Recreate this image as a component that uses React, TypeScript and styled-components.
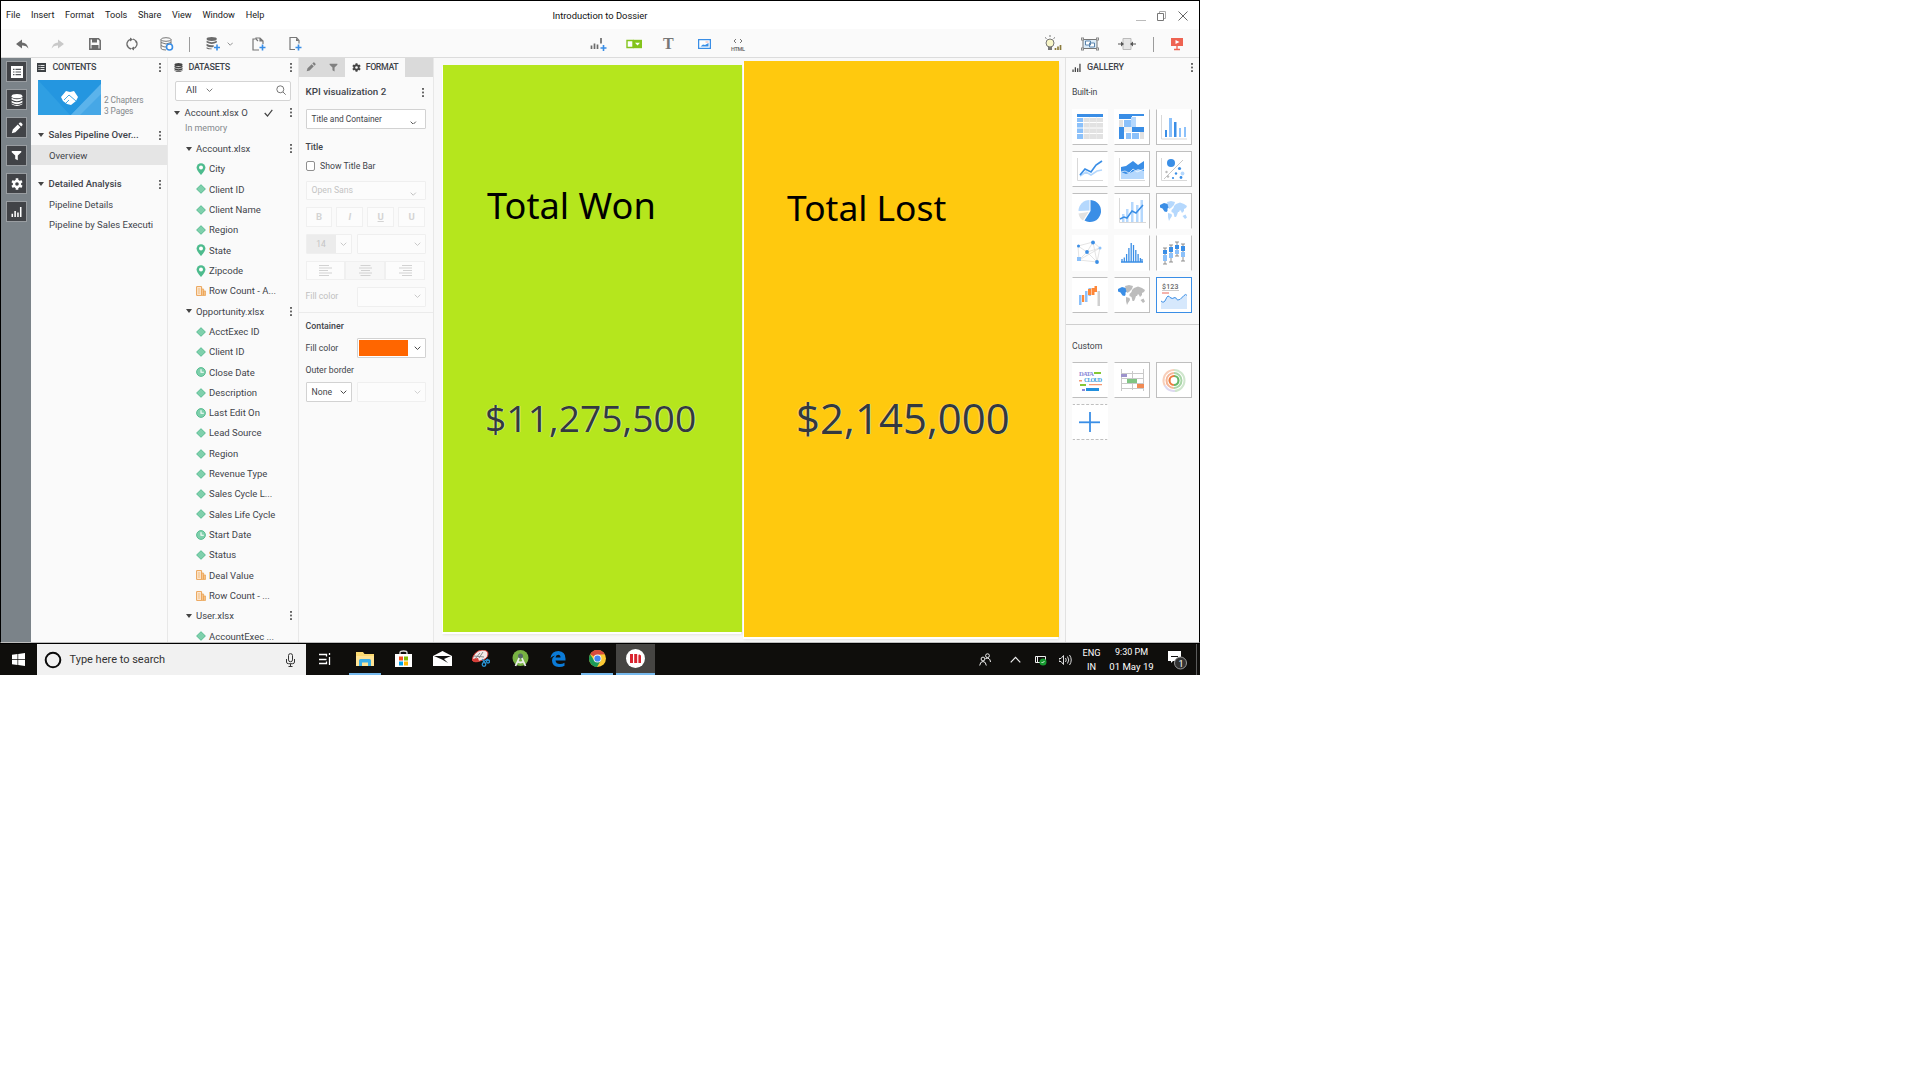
import React from 'react';
import styled, { createGlobalStyle, css } from 'styled-components';

const Global = createGlobalStyle`
  * { box-sizing: border-box; }
  body { margin: 0; background: #fff; font-family: Roboto, "Open Sans", sans-serif; color: #3c4248; }
  svg { display: block; flex: none; }
`;

const Desktop = styled.div`
  width: 1200px;
  height: 675px;
  display: flex;
  flex-direction: column;
  overflow: hidden;
`;
const AppWindow = styled.div`
  height: 643px;
  border: 1px solid #000;
  border-bottom-color: #bdbdbd;
  display: flex;
  flex-direction: column;
  background: #fafafa;
`;

const Text = styled.span<{ $size?: number; $weight?: number; $color?: string; $track?: number }>`
  font-size: ${p => p.$size ?? 9.5}px;
  font-weight: ${p => p.$weight ?? 400};
  color: ${p => p.$color ?? '#3f444a'};
  letter-spacing: ${p => p.$track ?? 0}px;
  line-height: 1;
  white-space: nowrap;
`;
const SerifGlyph = styled.span`
  font: 700 16px/1 "Liberation Serif", serif;
  width: 10px;
  color: #777;
`;
const Gap = styled.div<{ $w: number }>`
  flex: none;
  width: ${p => p.$w}px;
`;
const Spacer = styled.div<{ $h: number }>`
  flex: none;
  height: ${p => p.$h}px;
`;
const Fill = styled.div`
  flex: 1;
`;

/* ---------- title / menu bar ---------- */
const MenuBar = styled.div`
  height: 28px;
  flex: none;
  background: #fff;
  display: grid;
  grid-template-columns: 1fr auto 1fr;
  align-items: center;
  padding: 1px 5px 0;
`;
const Menus = styled.div`
  display: flex;
  gap: 10.7px;
`;
const WindowButtons = styled.div`
  display: flex;
  justify-content: flex-end;
  align-items: center;
  gap: 11px;
  padding-right: 6px;
`;

/* ---------- toolbar ---------- */
const Toolbar = styled.div`
  height: 29px;
  flex: none;
  border-bottom: 1px solid #dcdcdc;
  display: flex;
  align-items: center;
  padding: 2px 0 0 14px;
`;
const Separator = styled.div`
  width: 1px;
  height: 15px;
  background: #9b9b9b;
`;

const Workspace = styled.div`
  flex: 1;
  min-height: 0;
  display: flex;
`;

/* ---------- left rail ---------- */
const Rail = styled.div`
  width: 30px;
  flex: none;
  background: #7b8389;
  padding: 3px 0 0 5px;
  display: flex;
  flex-direction: column;
  gap: 7px;
`;
const RailButton = styled.div`
  width: 21px;
  height: 21px;
  background: #414347;
  border: 1px solid #999da1;
  display: flex;
  align-items: center;
  justify-content: center;
`;

/* ---------- panels ---------- */
const Panel = styled.div<{ $width: number }>`
  width: ${p => p.$width}px;
  flex: none;
  border-right: 1px solid #e8e8e8;
  display: flex;
  flex-direction: column;
  overflow: hidden;
`;
const PanelHeader = styled.div`
  height: 20px;
  flex: none;
  display: flex;
  align-items: center;
  padding: 0 5px 1px 6px;
`;
const Dots = styled.div`
  width: 2px;
  height: 9px;
  flex: none;
  margin-right: 1px;
  background: linear-gradient(#666 0 1.6px, transparent 1.6px) 0 0 / 2px 3.6px;
`;

const Cover = styled.div`
  display: flex;
  align-items: flex-end;
  gap: 3px;
  height: 39px;
  padding: 2px 0 2px 7px;
`;
const CoverMeta = styled.div`
  display: flex;
  flex-direction: column;
  gap: 2.5px;
`;
const TreeRow = styled.div<{ $height: number; $indent: number; $active?: boolean }>`
  height: ${p => p.$height}px;
  flex: none;
  display: flex;
  align-items: center;
  padding: 1px 5px 0 ${p => p.$indent}px;
  overflow: hidden;
  ${p => p.$active && css`background: #e5e5e5;`}
`;
const Caret = styled.div`
  width: 0;
  height: 0;
  flex: none;
  border: 3.2px solid transparent;
  border-top: 4px solid #444;
  border-bottom: 0;
`;
const SearchBox = styled.div`
  height: 20px;
  flex: none;
  margin: 3px 7px 0 7px;
  border: 1px solid #d4d4d4;
  border-radius: 2px;
  background: #fff;
  display: flex;
  align-items: center;
  padding: 0 4px 2px 10px;
`;
const IconCell = styled.div`
  width: 13px;
  flex: none;
`;

/* ---------- format panel ---------- */
const Tabs = styled.div`
  height: 19px;
  flex: none;
  display: flex;
  background: #dadada;
`;
const Tab = styled.div<{ $width: number; $active?: boolean }>`
  width: ${p => p.$width}px;
  display: flex;
  align-items: center;
  justify-content: center;
  gap: 5px;
  padding-bottom: 1px;
  background: ${p => (p.$active ? '#fafafa' : '#dadada')};
`;
const FormRow = styled.div<{ $height: number; $top: number }>`
  height: ${p => p.$height}px;
  margin: ${p => p.$top}px 8px 0 6.500px;
  flex: none;
  display: flex;
  align-items: center;
`;
const Field = styled.div<{ $width: number; $off?: boolean; $pad?: number }>`
  width: ${p => p.$width}px;
  height: 100%;
  flex: none;
  display: flex;
  align-items: center;
  justify-content: space-between;
  padding: 0 ${p => p.$pad ?? 4}px 0 5px;
  background: ${p => (p.$off ? '#fcfcfc' : '#fff')};
  border: 1px solid ${p => (p.$off ? '#efefef' : '#d2d2d2')};
  border-radius: 1px;
`;
const LowChevron = styled.div`
  padding-top: 7px;
`;
const SizeField = styled(Field)`
  padding-left: 0;
`;
const SizeValue = styled.div`
  width: 29px;
  height: 100%;
  background: #ececec;
  display: flex;
  align-items: center;
  justify-content: center;
`;
const StyleButton = styled.div<{ $shade?: boolean; $width: number }>`
  width: ${p => p.$width}px;
  height: 100%;
  display: flex;
  align-items: center;
  justify-content: center;
  border: 1px solid #f0f0f0;
  background: ${p => (p.$shade ? '#f7f7f7' : '#fcfcfc')};
`;
const CheckBox = styled.div`
  width: 9px;
  height: 10px;
  border: 1px solid #8f8f8f;
  border-radius: 2px;
  background: #fff;
`;
const LabelCell = styled.div`
  width: 51px;
  flex: none;
  display: flex;
`;
const Swatch = styled.div`
  width: 49px;
  height: 16px;
  margin-left: -4px;
  background: #ff6600;
`;
const Rule = styled.div<{ $top: number; $color: string }>`
  height: 1px;
  flex: none;
  margin-top: ${p => p.$top}px;
  background: ${p => p.$color};
`;

/* ---------- canvas ---------- */
const Canvas = styled.div`
  width: 632px;
  flex: none;
  display: flex;
  align-items: flex-start;
  gap: 2px;
  padding: 3px 0 0 9px;
  border-right: 1px solid #e2e2e2;
  background: #f8f8f8;
`;
const Card = styled.div<{ $color: string; $width: number; $height: number; $top: number }>`
  width: ${p => p.$width}px;
  height: ${p => p.$height}px;
  margin-top: ${p => p.$top}px;
  flex: none;
  background: ${p => p.$color};
  display: flex;
  flex-direction: column;
  box-shadow: -1px 2px 0 #fff, 0 3px 2px #e4e4e4;
`;
const CardTitle = styled.div<{ $left: number; $top: number; $size: number }>`
  padding: ${p => p.$top}px 0 0 ${p => p.$left}px;
  font: 400 ${p => p.$size}px/48px "Noto Sans", sans-serif;
  color: #000;
  white-space: nowrap;
`;
const CardValue = styled.div<{ $left: number; $top: number; $size: number }>`
  padding: ${p => p.$top}px 0 0 ${p => p.$left}px;
  font: 400 ${p => p.$size}px/50px "Open Sans", sans-serif;
  color: #33393e;
  white-space: nowrap;
  text-shadow: 1px 0 0 rgba(235, 238, 225, 0.7), -1px 0 0 rgba(235, 238, 225, 0.35);
`;

/* ---------- gallery ---------- */
const Gallery = styled.div`
  flex: 1;
  display: flex;
  flex-direction: column;
`;
const TileGrid = styled.div<{ $top: number }>`
  margin: ${p => p.$top}px 0 0 6px;
  display: grid;
  grid-template-columns: repeat(3, 36px);
  grid-auto-rows: 36px;
  gap: 6px;
`;
const Tile = styled.div<{ $edges: string; $tone?: string; $dashed?: boolean }>`
  background: #fff;
  border: 1px ${p => (p.$dashed ? 'dashed' : 'solid')} ${p => p.$tone ?? '#bfbfbf'};
  ${p => !p.$edges.includes('t') && 'border-top-color: #fff;'}
  ${p => !p.$edges.includes('r') && 'border-right-color: #fff;'}
  ${p => !p.$edges.includes('b') && 'border-bottom-color: #fff;'}
  ${p => !p.$edges.includes('l') && 'border-left-color: #fff;'}
  svg { margin: -1px; }
`;

/* ---------- taskbar ---------- */
const Taskbar = styled.div`
  height: 32px;
  background: #0f0e0c;
  border-top: 1px solid #000;
  display: flex;
`;
const StartButton = styled.div`
  width: 37px;
  display: flex;
  align-items: center;
  justify-content: center;
`;
const TaskSearch = styled.div`
  width: 269px;
  background: #f1f1f1;
  display: flex;
  align-items: center;
  padding: 0 10px 0 7px;
`;
const TaskApp = styled.div<{ $width: number; $open?: boolean; $active?: boolean; $left?: number }>`
  width: ${p => p.$width}px;
  margin-left: ${p => p.$left ?? 0}px;
  flex: none;
  display: flex;
  align-items: center;
  justify-content: center;
  border-bottom: 2px solid ${p => (p.$open ? '#76b9ed' : 'transparent')};
  background: ${p => (p.$active ? '#464543' : 'transparent')};
  background-clip: padding-box;
`;
const Tray = styled.div`
  flex: 1;
  display: flex;
  align-items: center;
  justify-content: flex-end;
`;
const TrayStack = styled.div<{ $width: number }>`
  width: ${p => p.$width}px;
  display: flex;
  flex-direction: column;
  align-items: center;
  gap: 5px;
`;
const TrayEdge = styled.div`
  width: 1px;
  height: 100%;
  margin-right: 3px;
  background: #5c5c5c;
`;

/* ---------- icons ---------- */
const B = '#3a8ee6';
const L = '#8cc1fa';
const P = '#b5d8fd';
const G = '#e2e2e2';

const Chevron = ({ c = '#555', w = 7 }: { c?: string; w?: number }) => (
  <svg width={w} height={w * 0.6} viewBox="0 0 10 6"><path d="M1 1l4 4 4-4" fill="none" stroke={c} strokeWidth="1.4" /></svg>
);
const Stack = ({ s = 10, c = '#444' }: { s?: number; c?: string }) => (
  <svg width={s} height={s} viewBox="0 0 12 12" fill={c}>
    <ellipse cx="6" cy="2.2" rx="5.4" ry="2.1" />
    <path d="M.6 3.7q5.4 3 10.8 0v1.8q-5.4 3.6-10.8 0zM.6 6.7q5.4 3 10.8 0v1.8q-5.4 3.4-10.8 0zM.6 9.5q5.4 3 10.8 0v.7q-5.4 3.6-10.8 0z" />
  </svg>
);
const ListIcon = ({ s, bg, fg }: { s: number; bg: string; fg: string }) => (
  <svg width={s} height={s} viewBox="0 0 12 12">
    <rect width="12" height="12" fill={bg} />
    <path d="M2 3.3h1.5M2 6h1.5M2 8.7h1.5M4.5 3.3H10M4.5 6H10M4.5 8.7H10" stroke={fg} strokeWidth="1.2" />
  </svg>
);
const Pencil = ({ s = 12, c = '#fff' }: { s?: number; c?: string }) => (
  <svg width={s} height={s} viewBox="0 0 12 12" fill={c}><path d="M.8 11.2l1-3.6 5-5 2.6 2.6-5 5zM7.6 1.8l1.2-1.2q.6-.4 1.2 0l1.4 1.4q.4.6 0 1.2l-1.2 1.2z" /></svg>
);
const Funnel = ({ s = 11, c = '#fff' }: { s?: number; c?: string }) => (
  <svg width={s} height={s} viewBox="0 0 12 12" fill={c}><path d="M.8 1h10.4v1.4L7.4 6v5.2l-2.8-1.4V6L.8 2.4z" /></svg>
);
const Gear = ({ s = 12, c = '#fff' }: { s?: number; c?: string }) => (
  <svg width={s} height={s} viewBox="0 0 12 12">
    <circle cx="6" cy="6" r="3" fill="none" stroke={c} strokeWidth="2.4" />
    {[0, 60, 120].map(a => <path key={a} d="M6 .3v2.3M6 9.4v2.3" stroke={c} strokeWidth="2.6" transform={`rotate(${a} 6 6)`} />)}
  </svg>
);
const Bars = ({ s = 11, c = '#fff' }: { s?: number; c?: string }) => (
  <svg width={s} height={s} viewBox="0 0 12 12"><path d="M1.4 12V8.5M4.5 12V5.5M7.6 12V7M10.6 12V1" stroke={c} strokeWidth="1.7" /></svg>
);
const Plus = ({ x, y }: { x: number; y: number }) => <path d={`M${x - 3} ${y}h6M${x} ${y - 3}v6`} stroke={B} strokeWidth="1.6" />;

const Diamond = () => (
  <svg width="10" height="10" viewBox="0 0 10 10"><path d="M5 .7L9.4 5 5 9.3.6 5z" fill="#7fd0ac" stroke="#4db88a" strokeWidth=".9" strokeLinejoin="round" /></svg>
);
const Pin = () => (
  <svg width="10" height="12" viewBox="0 0 10 12"><path d="M5 12Q.6 7.2.6 4.6a4.4 4.4 0 018.8 0Q9.4 7.2 5 12z" fill="#4dbb8d" /><circle cx="5" cy="4.4" r="2" fill="#fff" /></svg>
);
const Clock = () => (
  <svg width="10" height="10" viewBox="0 0 10 10"><circle cx="5" cy="5" r="4.4" fill="#7fd0ac" stroke="#4db88a" strokeWidth=".9" /><path d="M5 2.3v3h2.8" fill="none" stroke="#fff" strokeWidth="1.1" /></svg>
);
const Metric = () => (
  <svg width="10" height="10" viewBox="0 0 10 10"><path d="M.6.6h5v8.8h-5z" fill="#fdeedd" stroke="#eba354" /><path d="M5.6 3h2v6.4h-2zM7.6 5h2v4.4h-2z" fill="#f6c894" stroke="#eba354" strokeWidth=".8" /><path d="M1.8 3h2.6M1.8 5h2.6M1.8 7h2.6" stroke="#eba354" strokeWidth=".8" /></svg>
);
const MARKS = { d: Diamond, p: Pin, c: Clock, m: Metric };

const Tool = ({ children, w = 18, h = 16 }: { children: React.ReactNode; w?: number; h?: number }) => (
  <svg width={w} height={h} viewBox={`0 0 ${w} ${h}`} fill="none">{children}</svg>
);

const NORTH_AMERICA = 'M4 12l4-2 4 1 1.500 3-2 1.500v2.500l-1 1-2-.5-2-3-2.500-1z';
const GREENLAND = 'M11 9l4-1 4 1-1 3-3 3-2 1-1-3z';
const SOUTH_AMERICA = 'M12 20l3.500 1 .5 2-2 3-1 2-1-4z';
const EURASIA_AFRICA = 'M18 13l2-2 4-1.500 4 1.500 3 2-1 2-2 1v2l-2 2-1-2-1-1-1 2h-1l-1 3-1 2h-1.500l-1-4-2-1v-2l2-2z';
const AUSTRALIA = 'M26.500 23l3-1.500 1.500 3-2 1.500z';
const World = ({ a, b }: { a: string; b: string }) => (
  <g><path d={NORTH_AMERICA} fill={a} /><path d={GREENLAND + SOUTH_AMERICA + EURASIA_AFRICA + AUSTRALIA} fill={b} /></g>
);

const axes = <path d="M5.5 7v22.5H31" stroke="#d9d9d9" fill="none" />;
const tiles: { e: string; tone?: string; art: React.ReactNode }[] = [
  { e: 'b', art: <g><path d="M5 8v22h6V8z" fill={L} /><path d="M11.5 8H31v22H11.5z" fill={G} /><path d="M5 5h26v3H5z" fill={B} /><path d="M5 8.5h26M5 13.5h26M5 19h26M5 24.5h26" stroke="#fff" /><path d="M17.5 8v22M24.5 8v22" stroke="#efefef" strokeWidth=".6" /></g> },
  { e: 'rb', art: <g><path d="M5 5h13v5H5zM5 18h5v12H5zM18 18h12v5H18zM18 5h12v2H18z" fill={B} /><path d="M10 11h7v7h-7zM18 8h4v10h-4zM12 24h5v6h-5zM18 24h7v6h-7z" fill={L} /><path d="M17 8h5v10h-5z" fill={P} /><path d="M5 11h4v7H5zM26 23h4v7h-4z" fill={G} /><path d="M10 18h8v5h-8z" fill="#f1f1f1" /></g> },
  { e: 'lrb', art: <g><path d="M5.5 6v24H31" stroke="#d9d9d9" fill="none" /><path d="M9 21h2v7H9zM18 13h2.5v15H18z" fill={B} /><path d="M13 9h3v19h-3zM23 19h2v9h-2zM28 18h2v10h-2z" fill={L} /></g> },
  { e: 'tb', art: <g>{axes}<path d="M8 25l6-4 5 3 6-4 5-1" stroke={P} strokeWidth="1.6" fill="none" /><path d="M8 24l5-6 6 3 5-7 6-4" stroke={B} strokeWidth="1.7" fill="none" /></g> },
  { e: 'trb', art: <g>{axes}<path d="M7 16l5-1 7-5 5 4 6-4v18H7z" fill={B} /><path d="M7 21l5 2 6-2 6-3 6 2v8H7z" fill={P} /><path d="M7 21l4-1 4 2 4-4 4 3 7-3" stroke="#fff" strokeWidth=".7" fill="none" /></g> },
  { e: 'tlrb', art: <g>{axes}<path d="M8 28L27 9" stroke="#c8c8c8" /><circle cx="15" cy="12" r="4" fill={B} /><circle cx="23.5" cy="17.500" r="1.6" fill={B} /><circle cx="20" cy="22.500" r="1.2" fill={B} /><circle cx="17" cy="27" r="1.1" fill={B} /><circle cx="26.500" cy="22.500" r="1.9" fill={P} /><circle cx="25" cy="26.500" r="1.400" fill={B} /><circle cx="10.500" cy="21" r="1.200" fill="#bbb" /><circle cx="12" cy="25.500" r="1.200" fill="#bbb" /></g> },
  { e: 't', art: <g><path d="M18.500 18V7a11 11 0 11-6 20.500z" fill={B} /><path d="M17.500 17.500V7a11 11 0 00-11 11z" fill={P} /><path d="M16.500 19l-10 1.500q1 5 4.500 7z" fill={G} /></g> },
  { e: 'tr', art: <g><path d="M5.500 5v24.500H32" stroke="#d9d9d9" fill="none" /><path d="M8 21h2.500v8H8zM12 16h2.500v13H12zM17 9h2.500v20H17zM22 12h2.500v17H22zM26.500 7H29v22h-2.500z" fill={P} /><path d="M6 26l4-2 3 1 5-7 4 2 7-8" stroke={B} strokeWidth="1.500" fill="none" /></g> },
  { e: 'tlr', art: <World a={B} b={P} /> },
  { e: '', art: <g><path d="M6 11L21 7l7 6-3 14-18-2zM6 11l9 6L7 25M15 17L21 7l4 20zM15 17l13-4M7 25L28 13" stroke="#ddd" fill="none" strokeWidth=".8" /><g fill={B}><circle cx="6.500" cy="11" r="1.500" /><circle cx="21" cy="7.500" r="1.900" /><circle cx="15" cy="17" r="1.900" /><circle cx="25" cy="27" r="1.900" /></g><circle cx="28" cy="13" r="1.500" fill={L} /><path d="M5 22h4v4H5z" fill={L} /></g> },
  { e: 'r', art: <path d="M8 27v-3M10.300 27v-4.500M12.600 27v-8M14.900 27V13M17.200 27V8M19.500 27V10M21.800 27V15M24.100 27v-8M26.400 27v-4M28 27v-3M7 27h22" stroke={B} strokeWidth="1.300" fill="none" /> },
  { e: 'lr', art: <g><path d="M9 13v16M15 10v17M21 7v14M27 9v17M7 13h4M7 29h4M13 10h4M13 27h4M19 7h4M19 21h4M25 9h4M25 26h4" stroke="#777" strokeWidth=".8" /><path d="M7 15h4v4H7zM13 12h4v5h-4zM19 10h4v4h-4zM25 11h4v5h-4z" fill={B} /><path d="M7 20h4v6H7zM13 18h4v5h-4zM19 15h4v4h-4zM25 17h4v5h-4z" fill={L} /></g> },
  { e: 'tb', art: <g><path d="M7 18h2.500v10H7zM13 14h2.500v11H13zM16.500 11h2.500v8h-2.500z" fill={L} /><path d="M10 18h2.200v7H10zM16 12h3v6h-3zM19.500 11h3v7h-3zM22.500 9h2.500v6h-2.500z" fill="#fd8739" /><path d="M25.500 14H28v15h-2.500z" fill="#d0d0d0" /></g> },
  { e: 'trb', art: <World a={B} b="#bcbcbc" /> },
  { e: 'tlrb', tone: B, art: <g><text x="6" y="11.500" fontSize="7" fontFamily="Roboto, sans-serif" fontWeight="500" fill="#666" letterSpacing=".2">$123</text><path d="M6 13.500h17" stroke="#ccc" /><path d="M6 15h7v2H6z" fill="#f5b3ab" /><path d="M5 25l4-1 4-5 3 2 4-1 3 4 5-6 3 1v13H5z" fill="#d6e8fc" /><path d="M5 24q3 3 5-2t4-1.500q2 2 5 0 3 4 5 2t4-4 3 0" fill="none" stroke={B} /></g> },
];
const customTiles: { e: string; dashed?: boolean; art: React.ReactNode }[] = [
  { e: 'tb', art: <g><text x="7" y="13.500" fontSize="6.500" fontFamily="Liberation Serif, serif" fontWeight="700" fill="#8888d8" textLength="15">DATA</text><text x="12" y="19.500" fontSize="6" fontFamily="Liberation Serif, serif" fontWeight="700" fill="#3a9edc" textLength="18">CLOUD</text><path d="M22 10h7v2h-7zM8 22h6v2H8z" fill="#84c735" /><path d="M7 18h3v1.500H7zM17 22h13v1.200H17z" fill="#f49a76" /><path d="M14 26h13v3H14z" fill="#2190de" /><path d="M10 27h3v2h-3z" fill="#8888d8" /></g> },
  { e: 'trb', art: <g><path d="M7 11.500h23M7 16.500h23M7 21.500h23M7 26.500h23M7.500 7v22M18.500 9v19M29.500 7v22" stroke="#c9c9c9" /><path d="M7 12h6v3H7z" fill="#9d93cb" /><path d="M13 17h10v4H13z" fill="#7fc583" /><path d="M23 22h7v4h-7z" fill="#f08a54" /></g> },
  { e: 'tlrb', art: <g fill="none"><circle cx="18" cy="18.500" r="10.500" stroke="#cfe6cd" strokeWidth="2" strokeDasharray="33 33" transform="rotate(-90 18 18.500)" /><circle cx="18" cy="18.500" r="10.500" stroke="#f8cfba" strokeWidth="2" strokeDasharray="22 44" transform="rotate(150 18 18.500)" /><circle cx="18" cy="18.500" r="10.500" stroke="#ddd8f0" strokeWidth="2" strokeDasharray="12 54" transform="rotate(85 18 18.500)" /><circle cx="18" cy="18.500" r="7.500" stroke="#a9d6a8" strokeWidth="2" strokeDasharray="24 24" transform="rotate(-90 18 18.500)" /><circle cx="18" cy="18.500" r="7.500" stroke="#f5b698" strokeWidth="2" strokeDasharray="23 24" transform="rotate(92 18 18.500)" /><circle cx="18" cy="18.500" r="4.500" stroke="#66b868" strokeWidth="2.200" strokeDasharray="14 14" transform="rotate(-90 18 18.500)" /><circle cx="18" cy="18.500" r="4.500" stroke="#ee7a3d" strokeWidth="2.200" strokeDasharray="14 14" transform="rotate(92 18 18.500)" /></g> },
  { e: 'tb', dashed: true, art: <g><path d="M18 8v20" stroke={B} strokeWidth="1.800" /><path d="M7 18.300h21" stroke={B} strokeWidth="1.800" /></g> },
];

type Row = [string, string];
const account: Row[] = [['p', 'City'], ['d', 'Client ID'], ['d', 'Client Name'], ['d', 'Region'], ['p', 'State'], ['p', 'Zipcode'], ['m', 'Row Count - A...']];
const opportunity: Row[] = [['d', 'AcctExec ID'], ['d', 'Client ID'], ['c', 'Close Date'], ['d', 'Description'], ['c', 'Last Edit On'], ['d', 'Lead Source'], ['d', 'Region'], ['d', 'Revenue Type'], ['d', 'Sales Cycle L...'], ['d', 'Sales Life Cycle'], ['c', 'Start Date'], ['d', 'Status'], ['m', 'Deal Value'], ['m', 'Row Count - ...']];
const user: Row[] = [['d', 'AccountExec ...']];

const Group = ({ name, rows }: { name: string; rows: Row[] }) => (
  <>
    <TreeRow $height={20.500} $indent={18}>
      <Caret /><Gap $w={4} /><Text>{name}</Text><Fill /><Dots />
    </TreeRow>
    {rows.map(([kind, label], i) => {
      const Mark = MARKS[kind as keyof typeof MARKS];
      return (
        <TreeRow key={i} $height={20.310} $indent={28}>
          <IconCell><Mark /></IconCell><Text>{label}</Text>
        </TreeRow>
      );
    })}
  </>
);

const AlignIcon = ({ k }: { k: 'l' | 'c' | 'r' }) => {
  const x = (w: number) => (k === 'l' ? 0 : k === 'c' ? (13 - w) / 2 : 13 - w);
  return <svg width="13" height="11" viewBox="0 0 13 11">{[10, 13, 9, 13, 10].map((w, i) => <path key={i} d={`M${x(w)} ${i * 2.500 + .5}h${w}`} stroke="#d2d2d2" />)}</svg>;
};

export default function App() {
  return (
    <>
      <Global />
      <Desktop>
        <AppWindow>
          <MenuBar>
            <Menus>
              {['File', 'Insert', 'Format', 'Tools', 'Share', 'View', 'Window', 'Help'].map(m => <Text key={m} $size={9.150} $color="#222">{m}</Text>)}
            </Menus>
            <Text $size={9.400} $color="#111">Introduction to Dossier</Text>
            <WindowButtons>
              <svg width="10" height="10"><path d="M0 9.500h10" stroke="#bbb" /></svg>
              <svg width="10" height="10" fill="none"><path d="M.5 2.500h6v7h-6z" stroke="#777" /><path d="M2.500 2V.5h6v7H7" stroke="#aaa" /></svg>
              <svg width="10" height="10"><path d="M.5.5l9 9M9.500.5l-9 9" stroke="#666" /></svg>
            </WindowButtons>
          </MenuBar>

          <Toolbar>
            <Tool w={14}><path d="M7 3.500v3q5 0 6.500 6-2.500-3.500-6.500-3v3L1 8z" fill="#6b6b6b" /></Tool>
            <Gap $w={22} />
            <Tool w={14}><path d="M7 3.500v3Q2 6.500.500 12.500 3 9 7 9.500v3L13 8z" fill="#c9c9c9" /></Tool>
            <Gap $w={24} />
            <Tool w={12}><path d="M.8 2.800h8.700l1.700 1.700v8.700H.8z" stroke="#6b6b6b" strokeWidth="1.500" /><path d="M3 3h5v3.500H3zM2.500 9h7v4h-7z" fill="#6b6b6b" /></Tool>
            <Gap $w={24.500} />
            <Tool w={12}><path d="M2 11A4.800 4.800 0 014.500 3.400M10 5a4.800 4.800 0 01-2.500 7.500M7 3a5 5 0 013.500 4M5 13A5 5 0 011.300 9" stroke="#6b6b6b" strokeWidth="1.300" /><path d="M4 1.500l3 2-3 2zM8 10.500l-3 2 3 2z" fill="#6b6b6b" /></Tool>
            <Gap $w={22.500} />
            <Tool w={14}><ellipse cx="6" cy="3.500" rx="5" ry="1.800" stroke="#777" /><path d="M1 3.500v9q1 1.500 5 1.500M11 3.500V8M1 6.500q5 3 10 0M1 9.500q3 2 6 1.500" stroke="#777" /><circle cx="9.500" cy="11" r="3" stroke={B} strokeWidth="1.600" fill="#fff" /></Tool>
            <Gap $w={14.500} /><Separator /><Gap $w={16.500} />
            <svg width="15" height="16" viewBox="0 0 15 16"><g transform="translate(0 1) scale(.95)" fill="#6b6b6b"><ellipse cx="6" cy="2.200" rx="5.400" ry="2.100" /><path d="M.6 4q5.400 3 10.800 0v1.800q-5.400 3-10.800 0zM.6 7.200Q5 9.500 8 8.500v2Q4 11.500.6 9.400zM.6 10.800Q4 12.300 6 12v1q-4 0-5.400-1z" /></g><Plus x={11} y={11.500} /></svg>
            <Gap $w={5.500} /><Chevron c="#888" w={6.500} /><Gap $w={19} />
            <Tool w={14}><path d="M3.500 3H1v11h6M4 3v-1h4l3 3v3M8 2v3h3M4 3l2 2" stroke="#777" strokeWidth="1.200" /><path d="M8 2l3 3H8z" fill="#777" /><Plus x={10.500} y={11.500} /></Tool>
            <Gap $w={22.500} />
            <Tool w={14}><path d="M6 13.500H1v-12h6.500l2.500 3v3" stroke="#777" strokeWidth="1.200" /><path d="M7 2l3 3H7z" fill="#777" /><Plus x={9.500} y={11.500} /></Tool>
            <Gap $w={287} />
            <Tool w={18}><path d="M1.500 13V9.500M4.500 13V7.500M7.500 13V8.500M11 7.500V2" stroke="#6b6b6b" strokeWidth="1.700" /><Plus x={13.500} y={12} /></Tool>
            <Gap $w={18.500} />
            <Tool w={16}><path d="M1 4.500h6v7H1z" stroke="#84c41c" strokeWidth="1.400" fill="#fff" /><path d="M7 3.800h9v8.400H7z" fill="#84c41c" /><path d="M9 6.800h5l-2.500 2.800z" fill="#fff" /></Tool>
            <Gap $w={21} />
            <SerifGlyph>T</SerifGlyph>
            <Gap $w={24.500} />
            <Tool w={13}><path d="M.6 3.600h11.800v8.800H.6z" stroke={B} strokeWidth="1.300" fill="#fff" /><path d="M2.500 10.500l2.500-2 2 .5 3.500-2v3.500z" fill={B} /><path d="M7.500 5.500h3v1h-3z" fill="#f5a9a0" /></Tool>
            <Gap $w={19.500} />
            <svg width="17" height="15" viewBox="0 0 17 15"><path d="M6 2L4 4l2 2M10 2l2 2-2 2" fill="none" stroke="#777" /><text x="1" y="13.500" fontFamily="Roboto, sans-serif" fontWeight="700" fontSize="5.500" fill="#777" textLength="14">HTML</text></svg>
            <Fill />
            <Tool w={17} h={18}><circle cx="5" cy="8" r="4" fill="#f8f6c8" stroke="#777" /><path d="M5 0v2M0 2.500l1.500 1M10 2.500l-1.500 1" stroke="#777" /><path d="M3 12h4v3H3z" fill="#777" /><path d="M10.500 15v-2M13 15v-3.500M15.500 15V10" stroke="#8b7b3c" strokeWidth="1.700" /></Tool>
            <Gap $w={19} />
            <Tool w={18}><path d="M2 3.500h14v9H2z" stroke="#777" fill="#dcebf7" /><path d="M4.500 5h5v4h-5zM8.500 7h5v4h-5z" stroke="#5b84ad" fill="#fff" /><g fill="#888"><path d="M0 1.500h3v3H0zM15 1.500h3v3h-3zM0 11.500h3v3H0zM15 11.500h3v3h-3z" /></g><path d="M1 2.500h1v1H1zM16 2.500h1v1h-1zM1 12.500h1v1H1zM16 12.500h1v1h-1z" fill="#fff" /></Tool>
            <Gap $w={19} />
            <Tool w={18}><path d="M5 2.500h8v11H5z" fill="#e6e6e6" stroke="#bbb" /><path d="M0 8h4M14 8h4" stroke="#555" /><path d="M3 5.500L6 8l-3 2.500zM15 5.500L12 8l3 2.500z" fill="#555" /></Tool>
            <Gap $w={17} /><Separator /><Gap $w={17} />
            <Tool w={12}><path d="M0 2h12v8H0z" fill="#ee6352" /><path d="M4.500 4l4 2-4 2z" fill="#fff" /><path d="M6 10v3M3 13.500h6" stroke="#ee6352" strokeWidth="1.300" /></Tool>
            <Gap $w={16} />
          </Toolbar>

          <Workspace>
            <Rail>
              <RailButton><ListIcon s={12} bg="#fff" fg="#55585c" /></RailButton>
              <RailButton><Stack s={12} c="#fff" /></RailButton>
              <RailButton><Pencil /></RailButton>
              <RailButton><Funnel /></RailButton>
              <RailButton><Gear /></RailButton>
              <RailButton><Bars /></RailButton>
            </Rail>

            <Panel $width={137}>
              <PanelHeader>
                <ListIcon s={9} bg="#3c4044" fg="#fff" /><Gap $w={6.500} />
                <Text $size={9} $weight={500} $track={-0.3}>CONTENTS</Text><Fill /><Dots />
              </PanelHeader>
              <Cover>
                <svg width="63" height="35" viewBox="0 0 63 35"><rect width="63" height="35" fill="#2496e0" /><path d="M0 0L32 35H0z" fill="#2f9fe3" /><path d="M63 4L33 35h30z" fill="#46a7e6" /><path d="M63 4L33 35h9L63 14z" fill="#5bb3eb" /><path d="M23 17l5-6 4 1 4-1 4 6-2 4-5 4-4-1-4-3z" fill="#fff" /><path d="M26 20l5-5 7 6M28 23l3-3" stroke="#2f9fe3" strokeWidth=".9" fill="none" /></svg>
                <CoverMeta>
                  <Text $size={8.400} $color="#84888c" $track={-0.1}>2 Chapters</Text>
                  <Text $size={8.400} $color="#84888c" $track={-0.1}>3 Pages</Text>
                </CoverMeta>
              </Cover>
              <Spacer $h={7} />
              <TreeRow $height={21} $indent={7}>
                <Caret /><Gap $w={4.500} /><Text $size={9.650} $weight={500}>Sales Pipeline Over...</Text><Fill /><Dots />
              </TreeRow>
              <TreeRow $height={20} $indent={18} $active><Text>Overview</Text></TreeRow>
              <Spacer $h={8} />
              <TreeRow $height={21} $indent={7}>
                <Caret /><Gap $w={4.500} /><Text $weight={500}>Detailed Analysis</Text><Fill /><Dots />
              </TreeRow>
              <TreeRow $height={20.500} $indent={18}><Text $size={9.400}>Pipeline Details</Text></TreeRow>
              <TreeRow $height={20} $indent={18}><Text>Pipeline by Sales Executi</Text></TreeRow>
            </Panel>

            <Panel $width={131}>
              <PanelHeader>
                <Stack s={9} /><Gap $w={5.500} />
                <Text $size={9} $weight={500} $track={-0.3}>DATASETS</Text><Fill /><Dots />
              </PanelHeader>
              <SearchBox>
                <Text>All</Text><Gap $w={9} /><Chevron c="#777" /><Fill />
                <svg width="10" height="10" viewBox="0 0 10 10" fill="none" stroke="#777"><circle cx="4.300" cy="4.300" r="3.500" /><path d="M7 7l2.700 2.700" /></svg>
              </SearchBox>
              <TreeRow $height={22} $indent={6}>
                <Caret /><Gap $w={4.500} /><Text>Account.xlsx O</Text><Fill />
                <svg width="9" height="8" viewBox="0 0 9 8"><path d="M.7 4l2.800 3L8.300.8" fill="none" stroke="#444" strokeWidth="1.200" /></svg>
                <Gap $w={17} /><Dots />
              </TreeRow>
              <TreeRow $height={10} $indent={17}><Text $size={8.900} $color="#84888c">In memory</Text></TreeRow>
              <Spacer $h={5} />
              <Group name="Account.xlsx" rows={account} />
              <Group name="Opportunity.xlsx" rows={opportunity} />
              <Group name="User.xlsx" rows={user} />
            </Panel>

            <Panel $width={135}>
              <Tabs>
                <Tab $width={23}><Pencil s={10} c="#808080" /></Tab>
                <Tab $width={23}><Funnel s={9} c="#808080" /></Tab>
                <Tab $width={60} $active><Gear s={9} c="#444" /><Text $size={8.800} $weight={500} $track={-0.400}>FORMAT</Text></Tab>
              </Tabs>
              <FormRow $height={14} $top={8}><Text $size={9.800} $weight={500}>KPI visualization 2</Text><Fill /><Dots /></FormRow>
              <FormRow $height={20} $top={10}><Field $width={120} $pad={8}><Text $size={8.400}>Title and Container</Text><LowChevron><Chevron c="#444" w={6.500} /></LowChevron></Field></FormRow>
              <FormRow $height={12} $top={12}><Text $size={8.800} $weight={500}>Title</Text></FormRow>
              <FormRow $height={12} $top={7}><CheckBox /><Gap $w={5.500} /><Text $size={8.700}>Show Title Bar</Text></FormRow>
              <FormRow $height={19} $top={9}><Field $width={120} $off $pad={8}><Text $size={8.700} $color="#c4c4c4">Open Sans</Text><LowChevron><Chevron c="#bbb" w={6.500} /></LowChevron></Field></FormRow>
              <FormRow $height={20} $top={7}>
                {['B', 'I', 'U', 'U'].map((s, i) => (
                  <React.Fragment key={i}>
                    <StyleButton $width={27}><Text $weight={700} $color="#d4d4d4" as={s === 'I' ? 'em' : s === 'U' && i === 2 ? 'u' : 'span'}>{s}</Text></StyleButton>
                    {i < 3 && <Gap $w={4} />}
                  </React.Fragment>
                ))}
              </FormRow>
              <FormRow $height={20} $top={7}>
                <SizeField $width={46} $off $pad={4}><SizeValue><Text $size={8.500} $color="#c4c4c4">14</Text></SizeValue><Chevron c="#c8c8c8" /></SizeField>
                <Gap $w={5} /><Field $width={69} $off><span /><Chevron c="#c8c8c8" /></Field>
              </FormRow>
              <FormRow $height={19} $top={7}>
                <StyleButton $width={40}><AlignIcon k="l" /></StyleButton>
                <StyleButton $width={40} $shade><AlignIcon k="c" /></StyleButton>
                <StyleButton $width={40}><AlignIcon k="r" /></StyleButton>
              </FormRow>
              <FormRow $height={20} $top={6.500}>
                <LabelCell><Text $size={8.700} $color="#c0c0c0">Fill color</Text></LabelCell>
                <Field $width={69} $off><span /><Chevron c="#c8c8c8" /></Field>
              </FormRow>
              <Rule $top={5} $color="#ebebeb" />
              <FormRow $height={12} $top={8}><Text $size={8.800} $weight={500}>Container</Text></FormRow>
              <FormRow $height={20} $top={5.500}>
                <LabelCell><Text $size={8.700}>Fill color</Text></LabelCell>
                <Field $width={69}><Swatch /><Chevron c="#444" /></Field>
              </FormRow>
              <FormRow $height={12} $top={6}><Text $size={8.700}>Outer border</Text></FormRow>
              <FormRow $height={20} $top={6}>
                <Field $width={46}><Text $size={8.700}>None</Text><Chevron c="#444" /></Field>
                <Gap $w={5} /><Field $width={69} $off><span /><Chevron c="#d0d0d0" /></Field>
              </FormRow>
            </Panel>

            <Canvas>
              <Card $color="#b5e61d" $width={299} $height={567} $top={4}>
                <CardTitle $left={44} $top={115.500} $size={36.200}>Total Won</CardTitle>
                <CardValue $left={42} $top={164.500} $size={37.300}>$11,275,500</CardValue>
              </Card>
              <Card $color="#ffc90e" $width={315} $height={576} $top={0}>
                <CardTitle $left={43} $top={121.500} $size={35.400}>Total Lost</CardTitle>
                <CardValue $left={52} $top={162.500} $size={42}>$2,145,000</CardValue>
              </Card>
            </Canvas>

            <Gallery>
              <PanelHeader>
                <Bars s={9} c="#444" /><Gap $w={6} />
                <Text $size={9} $weight={500} $track={-0.150}>GALLERY</Text><Fill /><Dots />
              </PanelHeader>
              <TreeRow $height={28} $indent={6}><Text $size={8.700} $track={-0.200}>Built-in</Text></TreeRow>
              <TileGrid $top={3}>
                {tiles.map((t, i) => <Tile key={i} $edges={t.e} $tone={t.tone}><svg width="36" height="36" viewBox="0 0 36 36">{t.art}</svg></Tile>)}
              </TileGrid>
              <Rule $top={11} $color="#cfcfcf" />
              <Spacer $h={4} />
              <TreeRow $height={33} $indent={6}><Text $size={8.700}>Custom</Text></TreeRow>
              <TileGrid $top={0}>
                {customTiles.map((t, i) => <Tile key={i} $edges={t.e} $dashed={t.dashed}><svg width="36" height="36" viewBox="0 0 36 36">{t.art}</svg></Tile>)}
              </TileGrid>
            </Gallery>
          </Workspace>
        </AppWindow>

        <Taskbar>
          <StartButton><svg width="13" height="13" viewBox="0 0 13 13" fill="#fff"><path d="M0 1.800L5.500 1v5.200H0zM6.200.9L13 0v6.200H6.200zM0 6.900h5.500V12L0 11.200zM6.200 6.900H13V13l-6.800-.9z" /></svg></StartButton>
          <TaskSearch>
            <svg width="18" height="18"><circle cx="9" cy="9" r="7.300" fill="none" stroke="#0a0a0a" strokeWidth="2" /></svg>
            <Gap $w={7.500} /><Text $size={11} $color="#333">Type here to search</Text><Fill />
            <svg width="11" height="14" viewBox="0 0 11 14" fill="none" stroke="#333"><rect x="3.500" y=".7" width="4" height="8" rx="1.800" /><path d="M1.500 6v3q0 1.700 2 1.700h4q2 0 2-1.700V6M5.500 11v2.500M3.500 13.500h4" /></svg>
          </TaskSearch>
          <TaskApp $width={32} $left={3}><svg width="12" height="12" fill="none" stroke="#fff"><path d="M0 1.500h7.500v2M0 6.500h7.500M0 10.500h7.500v-2M10.500 0v2M10.500 4v8" strokeWidth="1.300" /></svg></TaskApp>
          <TaskApp $width={32} $left={8} $open><svg width="18" height="14" viewBox="0 0 18 14"><path d="M0 0h7l1.500 2H18v12H0z" fill="#fbd971" /><path d="M0 4h18v10H0z" fill="#ffe394" /><path d="M3 14V8.500Q3 7 4.500 7h9Q15 7 15 8.500V14h-3v-3.500H6V14z" fill="#3aaee8" /></svg></TaskApp>
          <TaskApp $width={32} $left={6}><svg width="17" height="18" viewBox="0 0 17 18"><path d="M5 5V2.500Q5 1 8.500 1T12 2.500V5" fill="none" stroke="#ddd" strokeWidth="1.300" /><path d="M0 4h17v13H0z" fill="#fff" /><path d="M4 6.500h4v4H4z" fill="#f25022" /><path d="M9 6.500h4v4H9z" fill="#7fba00" /><path d="M4 11.500h4v4H4z" fill="#00a4ef" /><path d="M9 11.500h4v4H9z" fill="#ffb900" /></svg></TaskApp>
          <TaskApp $width={32} $left={7}><svg width="19" height="15" viewBox="0 0 19 15"><path d="M0 5l9.500-5L19 5v10H0z" fill="#fff" /><path d="M1 5h17l-7 3 4 4-6-3.500z" fill="#111" /></svg></TaskApp>
          <TaskApp $width={32} $left={7}><svg width="18" height="17" viewBox="0 0 18 17"><path d="M0 10Q2 1 10 0q6 0 6 4 0 5-8 7-6 2-8-1z" fill="#f3e9e8" stroke="#d63b35" /><path d="M3 9l5-6M7 8l4-6M2 6l10 1" stroke="#888" /><path d="M0 9l6-1 1 3-5 1z" fill="#d63b35" /><path d="M10 9l4 5M16 9l-5 3" stroke="#2a95d8" strokeWidth="1.200" /><circle cx="12" cy="14.500" r="1.800" fill="none" stroke="#2a95d8" strokeWidth="1.300" /><circle cx="16" cy="11.500" r="1.500" fill="none" stroke="#2a95d8" strokeWidth="1.300" /></svg></TaskApp>
          <TaskApp $width={32} $left={7}><svg width="17" height="17" viewBox="0 0 17 17"><circle cx="8.500" cy="8" r="8" fill="#78b143" /><path d="M8.500 5L3.500 16M8.500 5l5 11M5 11q3.500 3 7 0" stroke="#eee" strokeWidth="1.800" fill="none" /><circle cx="8.500" cy="6" r="2.500" fill="#566" /></svg></TaskApp>
          <TaskApp $width={32} $left={6}><svg width="16" height="16" viewBox="0 0 16 16"><path d="M.5 7Q1.500 0 8.500 0 15.500.5 15.500 7.500v2H5.500q.5 3.500 4.500 3.500 2.500 0 4.500-1.200v3Q12.500 16 9 16 2 15.500 2 9.500 2 6.500 5 4.500 2 5 .5 7zM5.500 6.500h5q0-2.700-2.300-2.700T5.500 6.500z" fill="#0b7bd8" /></svg></TaskApp>
          <TaskApp $width={32} $left={7} $open><svg width="17" height="17" viewBox="0 0 18 18"><circle cx="9" cy="9" r="9" fill="#fcc934" /><path d="M9 9L1.200 4.500A9 9 0 0116.800 4.500L9 5z" fill="#d84b3d" /><path d="M1.200 4.500A9 9 0 008.500 18l4-7L9 9 5.500 11z" fill="#1c9a58" /><circle cx="9" cy="9" r="4.200" fill="#f4f4f4" /><circle cx="9" cy="9" r="3.300" fill="#4285f4" /></svg></TaskApp>
          <TaskApp $width={39} $left={3} $open $active><svg width="19" height="19" viewBox="0 0 19 19"><circle cx="9.500" cy="9.500" r="9.500" fill="#fff" /><path d="M4 5h3v9H4zM8.200 5h3v9h-3zM12.400 6.500L13 5.300l2 1.200V14h-2.600z" fill="#d9232e" /></svg></TaskApp>
          <Tray>
            <svg width="12" height="13" viewBox="0 0 12 13" fill="none" stroke="#eee"><circle cx="4" cy="6" r="1.900" /><path d="M.7 12.500q.5-4 3.300-4t3.300 4" /><circle cx="8.500" cy="2.700" r="1.900" /><path d="M6.500 5.500q4.500-1.500 5 3.500" /></svg>
            <Gap $w={19.500} />
            <svg width="11" height="7"><path d="M.7 6.300l4.800-5 4.800 5" fill="none" stroke="#eee" strokeWidth="1.200" /></svg>
            <Gap $w={13} />
            <svg width="13" height="12" viewBox="0 0 13 12"><path d="M1.500 2.500h10v6h-10zM3.500 2v7" fill="none" stroke="#eee" /><circle cx="9" cy="8" r="3.500" fill="#179a30" /><path d="M7.500 8l1 1 2-2" stroke="#fff" fill="none" strokeWidth=".8" /></svg>
            <Gap $w={12} />
            <svg width="13" height="12" viewBox="0 0 13 12" fill="none" stroke="#ddd"><path d="M0 4.500v3h2l2.500 3v-9L2 4.500zM6.500 4q1.500 2 0 4M8.500 2.500q2.500 3.500 0 7M10.500 1q3.500 5 0 10" /></svg>
            <Gap $w={8.500} />
            <TrayStack $width={22}><Text $color="#fff" $size={9.200}>ENG</Text><Text $color="#fff" $size={9.200}>IN</Text></TrayStack>
            <Gap $w={5} />
            <TrayStack $width={48}><Text $color="#fff" $size={9}>9:30 PM</Text><Text $color="#fff" $size={9.600}>01 May 19</Text></TrayStack>
            <Gap $w={12.500} />
            <svg width="20" height="20" viewBox="0 0 20 20"><path d="M0 1h13v10H5l-2 2v-2H0z" fill="#fff" /><path d="M3 6.500h7" stroke="#111" /><circle cx="12.500" cy="13" r="6" fill="#333" stroke="#999" /><text x="10.500" y="16.500" fontSize="9" fontFamily="Roboto, sans-serif" fill="#fff">1</text></svg>
            <Gap $w={8} />
            <TrayEdge />
          </Tray>
        </Taskbar>
      </Desktop>
    </>
  );
}
